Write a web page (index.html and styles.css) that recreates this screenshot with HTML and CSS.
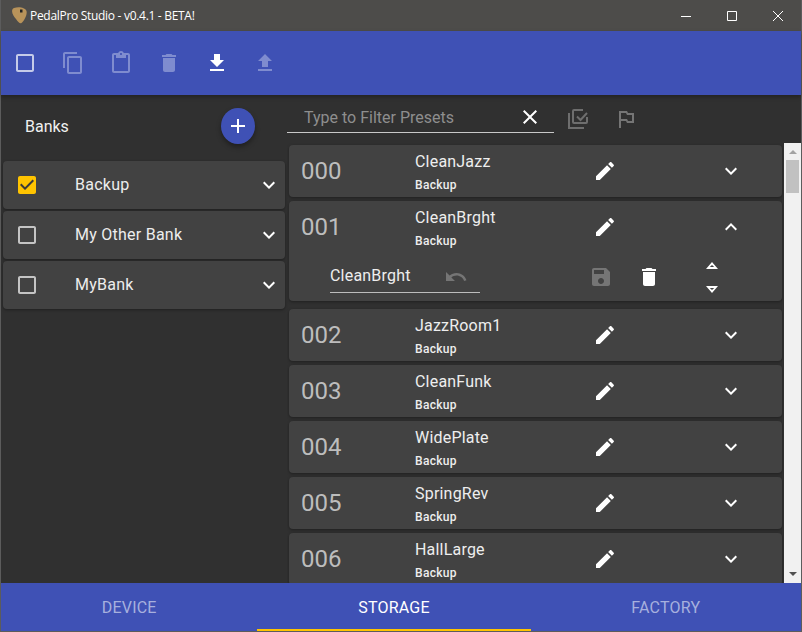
FILE: index.html
```html
<!DOCTYPE html>
<html lang="en">
<head>
<meta charset="utf-8">
<title>PedalPro Studio</title>
<link rel="stylesheet" href="styles.css">
</head>
<body>
<svg class="defs" width="0" height="0">
  <symbol id="i-box" viewBox="0 0 24 24"><path d="M19 5v14H5V5h14m0-2H5c-1.1 0-2 .9-2 2v14c0 1.1.9 2 2 2h14c1.1 0 2-.9 2-2V5c0-1.1-.9-2-2-2z"/></symbol>
  <symbol id="i-checked" viewBox="0 0 24 24"><path d="M19 3H5c-1.1 0-2 .9-2 2v14c0 1.1.9 2 2 2h14c1.1 0 2-.9 2-2V5c0-1.1-.9-2-2-2z" fill="#ffc400"/><path d="M10 17l-5-5 1.41-1.41L10 14.17l7.59-7.59L19 8z" fill="#3a3a3a"/></symbol>
  <symbol id="i-copy" viewBox="0 0 24 24"><path d="M16 1H4c-1.1 0-2 .9-2 2v14h2V3h12V1zm3 4H8c-1.1 0-2 .9-2 2v14c0 1.1.9 2 2 2h11c1.1 0 2-.9 2-2V7c0-1.1-.9-2-2-2zm0 16H8V7h11v14z"/></symbol>
  <symbol id="i-paste" viewBox="0 0 24 24"><path d="M19 2h-4.18C14.4.84 13.3 0 12 0c-1.3 0-2.4.84-2.82 2H5c-1.1 0-2 .9-2 2v16c0 1.1.9 2 2 2h14c1.1 0 2-.9 2-2V4c0-1.1-.9-2-2-2zm-7 0c.55 0 1 .45 1 1s-.45 1-1 1-1-.45-1-1 .45-1 1-1zm7 18H5V4h2v3h10V4h2v16z"/></symbol>
  <symbol id="i-delete" viewBox="0 0 24 24"><path d="M6 19c0 1.1.9 2 2 2h8c1.1 0 2-.9 2-2V7H6v12zM19 4h-3.5l-1-1h-5l-1 1H5v2h14V4z"/></symbol>
  <symbol id="i-down" viewBox="0 0 24 24"><path d="M19 9h-4V3H9v6H5l7 7 7-7zM5 18v2h14v-2H5z"/></symbol>
  <symbol id="i-up" viewBox="0 0 24 24"><path d="M9 16h6v-6h4l-7-7-7 7h4v6zm-4 2h14v2H5v-2z"/></symbol>
  <symbol id="i-close" viewBox="0 0 24 24"><path d="M19 6.41L17.59 5 12 10.59 6.41 5 5 6.41 10.59 12 5 17.59 6.41 19 12 13.41 17.59 19 19 17.59 13.41 12 19 6.41z"/></symbol>
  <symbol id="i-lib" viewBox="0 0 24 24"><path d="M17 3H8a1 1 0 0 0-1 1v11a1 1 0 0 0 1 1h12a1 1 0 0 0 1-1v-5M11 9.500l3.500 3.500L21 6M3 6v15h15" fill="none" stroke="#6e6e6e" stroke-width="2"/></symbol>
  <symbol id="i-flag" viewBox="0 0 24 24"><path d="M14 6l-1-2H5v17h2v-7h5l1 2h7V6h-6zm4 8h-4l-1-2H7V6h5l1 2h5v6z"/></symbol>
  <symbol id="i-edit" viewBox="0 0 24 24"><path d="M3 17.25V21h3.75L17.81 9.94l-3.75-3.75L3 17.25zM20.71 7.04c.39-.39.39-1.02 0-1.41l-2.34-2.34c-.39-.39-1.02-.39-1.41 0l-1.83 1.83 3.75 3.75 1.83-1.83z"/></symbol>
  <symbol id="i-more" viewBox="0 0 24 24"><path d="M16.59 8.59L12 13.17 7.41 8.59 6 10l6 6 6-6z"/></symbol>
  <symbol id="i-less" viewBox="0 0 24 24"><path d="M12 8l-6 6 1.41 1.41L12 10.83l4.59 4.58L18 14z"/></symbol>
  <symbol id="i-add" viewBox="0 0 24 24"><path d="M19 13h-6v6h-2v-6H5v-2h6V5h2v6h6v2z"/></symbol>
  <symbol id="i-undo" viewBox="0 0 24 24"><path d="M12.5 8c-2.65 0-5.05.99-6.9 2.6L2 7v9h9l-3.62-3.62c1.39-1.16 3.16-1.88 5.12-1.88 3.54 0 6.55 2.31 7.6 5.5l2.37-.78C21.08 11.03 17.15 8 12.5 8z"/></symbol>
  <symbol id="i-save" viewBox="0 0 24 24"><path d="M17 3H5c-1.11 0-2 .9-2 2v14c0 1.1.89 2 2 2h14c1.1 0 2-.9 2-2V7l-4-4zm-5 16c-1.66 0-3-1.34-3-3s1.34-3 3-3 3 1.34 3 3-1.34 3-3 3zm3-10H5V5h10v4z"/></symbol>
  <symbol id="i-eject-up" viewBox="0 0 14 8"><path fill-rule="evenodd" d="M7 1L1 8h12zM7 4L4.800 6h4.400z"/></symbol>
  <symbol id="i-eject-down" viewBox="0 0 14 8"><path fill-rule="evenodd" d="M7 8L1 1h12zM7 5L4.800 3h4.400z"/></symbol>
</svg>
<div class="window">
  <header class="titlebar">
    <svg class="logo" viewBox="0 0 16 17"><path d="M3 1C7-.5 14 0 15.500 4c1 4-2.500 10-5 12-1.500 1-3.500-1-5.500-4C2 9-1 3 3 1z" fill="#b8935a"/><path d="M9 2.500h2.500v3H9z" fill="#222"/></svg>
    <span class="title">PedalPro Studio - v0.4.1 - BETA!</span>
    <div class="winbtns">
      <svg class="winbtn" viewBox="0 0 46 30"><path d="M18 15.500h10" stroke="#fff" fill="none"/></svg>
      <svg class="winbtn" viewBox="0 0 46 30"><path d="M18.500 10.500h9v9h-9z" stroke="#fff" fill="none"/></svg>
      <svg class="winbtn" viewBox="0 0 46 30"><path d="M18 10l10 10M28 10L18 20" stroke="#fff" fill="none"/></svg>
    </div>
  </header>
  <div class="toolbar">
    <svg class="ic tb dim1"><use href="#i-box"/></svg>
    <svg class="ic tb dim2"><use href="#i-copy"/></svg>
    <svg class="ic tb dim2"><use href="#i-paste"/></svg>
    <svg class="ic tb dim2"><use href="#i-delete"/></svg>
    <svg class="ic tb on"><use href="#i-down"/></svg>
    <svg class="ic tb dim2"><use href="#i-up"/></svg>
  </div>
  <main class="content">
    <aside class="banks">
      <div class="banks-head">
        <span class="banks-title">Banks</span>
        <button class="fab"><svg class="ic on"><use href="#i-add"/></svg></button>
      </div>
      <div class="bank"><svg class="ic"><use href="#i-checked"/></svg><span class="bank-name">Backup</span><svg class="ic on"><use href="#i-more"/></svg></div>
      <div class="bank"><svg class="ic soft"><use href="#i-box"/></svg><span class="bank-name">My Other Bank</span><svg class="ic on"><use href="#i-more"/></svg></div>
      <div class="bank"><svg class="ic soft"><use href="#i-box"/></svg><span class="bank-name">MyBank</span><svg class="ic on"><use href="#i-more"/></svg></div>
    </aside>
    <section class="presets">
      <div class="filter-row">
        <div class="filter">
          <span class="filter-text">Type to Filter Presets</span>
          <svg class="ic on"><use href="#i-close"/></svg>
        </div>
        <svg class="ic grey"><use href="#i-lib"/></svg>
        <svg class="ic grey"><use href="#i-flag"/></svg>
      </div>
      <div class="list-wrap">
        <div class="list">
          <div class="preset">
            <div class="preset-main"><span class="num">000</span><div class="names"><div class="name">CleanJazz</div><div class="sub">Backup</div></div><svg class="ic on edit"><use href="#i-edit"/></svg><svg class="ic on chev"><use href="#i-more"/></svg></div>
          </div>
          <div class="preset open">
            <div class="preset-main"><span class="num">001</span><div class="names"><div class="name">CleanBrght</div><div class="sub">Backup</div></div><svg class="ic on edit"><use href="#i-edit"/></svg><svg class="ic on chev"><use href="#i-less"/></svg></div>
            <div class="preset-edit">
              <div class="rename"><span class="rename-text">CleanBrght</span><svg class="ic grey"><use href="#i-undo"/></svg></div>
              <svg class="ic grey save"><use href="#i-save"/></svg>
              <svg class="ic on trash"><use href="#i-delete"/></svg>
              <div class="moves"><svg class="ic on small"><use href="#i-eject-up"/></svg><svg class="ic on small"><use href="#i-eject-down"/></svg></div>
            </div>
          </div>
          <div class="preset">
            <div class="preset-main"><span class="num">002</span><div class="names"><div class="name">JazzRoom1</div><div class="sub">Backup</div></div><svg class="ic on edit"><use href="#i-edit"/></svg><svg class="ic on chev"><use href="#i-more"/></svg></div>
          </div>
          <div class="preset">
            <div class="preset-main"><span class="num">003</span><div class="names"><div class="name">CleanFunk</div><div class="sub">Backup</div></div><svg class="ic on edit"><use href="#i-edit"/></svg><svg class="ic on chev"><use href="#i-more"/></svg></div>
          </div>
          <div class="preset">
            <div class="preset-main"><span class="num">004</span><div class="names"><div class="name">WidePlate</div><div class="sub">Backup</div></div><svg class="ic on edit"><use href="#i-edit"/></svg><svg class="ic on chev"><use href="#i-more"/></svg></div>
          </div>
          <div class="preset">
            <div class="preset-main"><span class="num">005</span><div class="names"><div class="name">SpringRev</div><div class="sub">Backup</div></div><svg class="ic on edit"><use href="#i-edit"/></svg><svg class="ic on chev"><use href="#i-more"/></svg></div>
          </div>
          <div class="preset">
            <div class="preset-main"><span class="num">006</span><div class="names"><div class="name">HallLarge</div><div class="sub">Backup</div></div><svg class="ic on edit"><use href="#i-edit"/></svg><svg class="ic on chev"><use href="#i-more"/></svg></div>
          </div>
        </div>
        <div class="scrollbar">
          <span class="arrow arrow-up"></span>
          <span class="thumb"></span>
          <span class="arrow arrow-down"></span>
        </div>
      </div>
    </section>
  </main>
  <nav class="tabs">
    <div class="tab">DEVICE</div>
    <div class="tab active">STORAGE</div>
    <div class="tab">FACTORY</div>
  </nav>
</div>
</body>
</html>
```
FILE: styles.css
```css
* { box-sizing: border-box; }
html, body { margin: 0; padding: 0; }
body { width: 802px; height: 632px; overflow: hidden; background: #303030; font-family: Roboto, "Liberation Sans", sans-serif; color: #fff; }
.defs { display: block; height: 0; }
.window { width: 802px; height: 632px; display: flex; flex-direction: column; border: 1px solid #5c5c5c; border-top: 0; }
.ic { width: 24px; height: 24px; flex: none; display: block; fill: #fff; }
.ic.on { fill: #fff; }
.ic.soft { fill: #c4c4c4; }
.ic.grey { fill: #757575; }

.titlebar { height: 31px; flex: none; background: #4d4c4a; display: flex; align-items: center; padding-left: 10px; }
.logo { width: 16px; height: 17px; margin-right: 3px; }
.title { font-family: "Open Sans", "Noto Sans", sans-serif; font-size: 12px; letter-spacing: -.3px; color: #fff; white-space: nowrap; }
.winbtns { margin-left: auto; display: flex; }
.winbtn { width: 46px; height: 30px; display: block; }

.toolbar { height: 64px; flex: none; background: #3f51b5; display: flex; align-items: center; padding-left: 12px; gap: 24px; box-shadow: 0 2px 4px rgba(0,0,0,.3); position: relative; }
.toolbar .dim1 { fill: #c5cbe9; }
.toolbar .dim2 { fill: #7f8ccf; }

.content { flex: 1; min-height: 0; display: flex; background: #303030; }
.banks { width: 286px; flex: none; padding: 0 2px; }
.banks-head { height: 66px; display: flex; align-items: center; justify-content: space-between; padding: 0 30px 4px 22px; }
.banks-title { font-size: 16px; color: #f0f0f0; }
.fab { width: 34px; height: 36px; padding: 0; border: 0; border-radius: 50%; background: #3f51b5; display: flex; align-items: center; justify-content: center; box-shadow: 0 3px 5px rgba(0,0,0,.35); }
.bank { height: 48px; margin-bottom: 2px; background: #424242; border-radius: 4px; display: flex; align-items: center; padding: 0 4px 0 12px; box-shadow: 0 1px 3px rgba(0,0,0,.35); }
.bank-name { flex: 1; margin: -2px 0 0 36px; font-size: 16px; letter-spacing: .25px; color: #ededed; }

.presets { flex: 1; min-width: 0; display: flex; flex-direction: column; }
.filter-row { height: 48px; flex: none; display: flex; align-items: flex-start; }
.filter { width: 267px; height: 38px; display: flex; align-items: center; justify-content: space-between; padding: 7px 12px 0 17px; border-bottom: 1px solid #c8c8c8; margin-right: 12px; }
.filter-text { font-size: 16px; color: #8e8e8e; }
.filter-row > .ic { margin-top: 12px; margin-right: 12px; }
.filter-row > .ic + .ic { margin-left: 12px; }

.list-wrap { flex: 1; min-height: 0; display: flex; }
.list { flex: 1; min-width: 0; overflow: hidden; padding: 2px 1px 0 2px; }
.preset { height: 52px; margin-bottom: 4px; background: #424242; border-radius: 4px; box-shadow: 0 1px 3px rgba(0,0,0,.35); }
.preset.open { height: 100px; margin-bottom: 8px; }
.preset-main { height: 52px; display: flex; align-items: center; padding-left: 12px; }
.num { width: 114px; flex: none; font-size: 24px; color: #bdbdbd; }
.names { width: 178px; flex: none; padding-top: 2px; }
.name { font-size: 16px; line-height: 20px; letter-spacing: .2px; color: #eee; }
.sub { font-size: 12px; line-height: 16px; font-weight: 500; letter-spacing: .3px; color: #eee; margin-top: 5px; }
.chev { margin-left: 102px; }

.preset-edit { height: 48px; display: flex; align-items: center; }
.rename { width: 150px; height: 32px; margin-left: 41px; display: flex; align-items: center; border-bottom: 1px solid #bdbdbd; }
.rename-text { width: 114px; margin-top: -2px; font-size: 16px; letter-spacing: .2px; color: #eee; }
.save { margin-left: 109px; }
.trash { margin-left: 24px; }
.moves { margin-left: 44px; display: flex; flex-direction: column; gap: 16px; }
.ic.small { width: 14px; height: 8px; }

.scrollbar { width: 17px; flex: none; background: #f1f1f1; display: flex; flex-direction: column; align-items: center; margin-left: 1px; }
.arrow { width: 0; height: 0; border-left: 4px solid transparent; border-right: 4px solid transparent; flex: none; }
.arrow-up { border-bottom: 4px solid #a3a3a3; margin-top: 7px; margin-bottom: 6px; }
.arrow-down { border-top: 4px solid #505050; margin-top: auto; margin-bottom: 7px; }
.thumb { width: 13px; height: 33px; background: #c1c1c1; flex: none; }

.tabs { height: 48px; flex: none; display: flex; background: #3f51b5; position: relative; }
.tab { flex: 1 1 auto; display: flex; align-items: center; justify-content: center; font-size: 16px; letter-spacing: .2px; color: #a7b0de; }
.tab.active { color: #fff; border-bottom: 2px solid #ffc400; padding-top: 2px; }
```
